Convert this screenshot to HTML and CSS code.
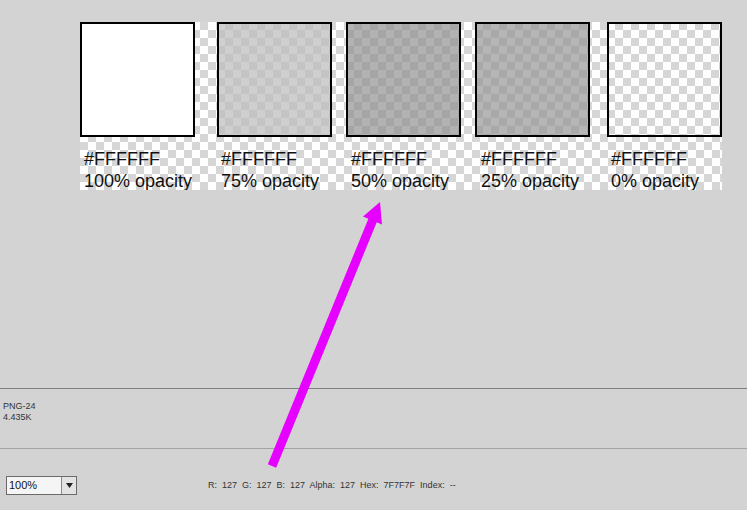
FILE: index.html
```html
<!DOCTYPE html>
<html lang="en">
<head>
<meta charset="utf-8">
<title>Opacity swatches</title>
<link rel="stylesheet" href="styles.css">
</head>
<body>
<main class="stage">
  <div class="sheet">
    <div class="cell w137">
      <div class="swatch s100"></div>
      <p class="label">#FFFFFF<br>100% opacity</p>
    </div>
    <div class="cell w129">
      <div class="swatch s75"></div>
      <p class="label">#FFFFFF<br>75% opacity</p>
    </div>
    <div class="cell w129">
      <div class="swatch s50"></div>
      <p class="label l5">#FFFFFF<br>50% opacity</p>
    </div>
    <div class="cell w132">
      <div class="swatch s25"></div>
      <p class="label l6">#FFFFFF<br>25% opacity</p>
    </div>
    <div class="cell w115">
      <div class="swatch s0"></div>
      <p class="label">#FFFFFF<br>0% opacity</p>
    </div>
  </div>
</main>
<section class="info">
  <p class="meta">PNG-24<br>4.435K</p>
</section>
<footer class="status">
  <div class="zoom-select">
    <span class="zoom-value">100%</span>
    <span class="zoom-btn"><svg width="7" height="5" viewBox="0 0 7 5"><path d="M0 0H7L3.5 5Z" fill="#222"/></svg></span>
  </div>
  <p class="readout">R:&nbsp; 127&nbsp; G:&nbsp; 127&nbsp; B:&nbsp; 127&nbsp; Alpha:&nbsp; 127&nbsp; Hex:&nbsp; 7F7F7F&nbsp; Index:&nbsp; --</p>
</footer>
<svg class="arrow" width="747" height="510" viewBox="0 0 747 510">
  <line x1="272" y1="466" x2="374" y2="217" stroke="#e600ff" stroke-width="9"/>
  <polygon points="380,202 363,216.5 382,224.5" fill="#e600ff"/>
</svg>
</body>
</html>
```
FILE: styles.css
```css
* { box-sizing: border-box; }
html, body { margin: 0; padding: 0; }
body {
  width: 747px;
  height: 510px;
  background: #d3d3d3;
  font-family: "Liberation Sans", Arial, sans-serif;
  position: relative;
  overflow: hidden;
}
.stage {
  height: 388px;
  padding: 22px 0 0 80px;
}
.sheet {
  display: flex;
  width: 642px;
  height: 168px;
  overflow: hidden;
  background-color: #fff;
  background-image: conic-gradient(#d6d6d6 25%, #fff 0 50%, #d6d6d6 0 75%, #fff 0);
  background-size: 16px 16px;
}
.cell { flex: none; }
.w137 { width: 137px; }
.w129 { width: 129px; }
.w132 { width: 132px; }
.w115 { width: 115px; }
.swatch {
  width: 115px;
  height: 115px;
  border: 2px solid #000;
  background-size: 16px 16px;
  background-position: -2px -2px;
}
.s100 { background: #fff; }
.s75 { background-image: conic-gradient(#c4c4c4 25%, #cfcfcf 0 50%, #c4c4c4 0 75%, #cfcfcf 0); }
.s50 { background-image: conic-gradient(#a5a5a5 25%, #b2b2b2 0 50%, #a5a5a5 0 75%, #b2b2b2 0); }
.s25 { background-image: conic-gradient(#a9a9a9 25%, #b6b6b6 0 50%, #a9a9a9 0 75%, #b6b6b6 0); }
.s0 { background-image: conic-gradient(#d6d6d6 25%, #fff 0 50%, #d6d6d6 0 75%, #fff 0); }
.label {
  margin: 11px 0 0;
  padding-left: 4px;
  font-size: 18px;
  line-height: 22px;
  color: #111;
  white-space: nowrap;
}
.l5 { padding-left: 5px; }
.l6 { padding-left: 6px; }
.info {
  height: 60px;
  border-top: 1px solid #7f7f7f;
  padding: 12px 0 0 3px;
}
.meta {
  margin: 0;
  font-size: 9px;
  line-height: 11px;
  color: #333;
}
.status {
  height: 61px;
  border-top: 1px solid #a3a3a3;
  display: flex;
  align-items: flex-start;
  padding: 27px 0 0 6px;
}
.zoom-select {
  display: flex;
  width: 71px;
  height: 19px;
  border: 1px solid #6a6a6a;
  background: #f5f5f5;
}
.zoom-value {
  flex: 1;
  font-size: 11px;
  line-height: 17px;
  padding-left: 2px;
  color: #111;
}
.zoom-btn {
  width: 15px;
  border-left: 1px solid #8a8a8a;
  background: #e3e3e3;
  display: flex;
  align-items: center;
  justify-content: center;
}
.readout {
  margin: 4px 0 0 131px;
  font-size: 9px;
  line-height: 11px;
  color: #333;
  white-space: nowrap;
}
.arrow {
  position: absolute;
  left: 0;
  top: 0;
  pointer-events: none;
}
```
